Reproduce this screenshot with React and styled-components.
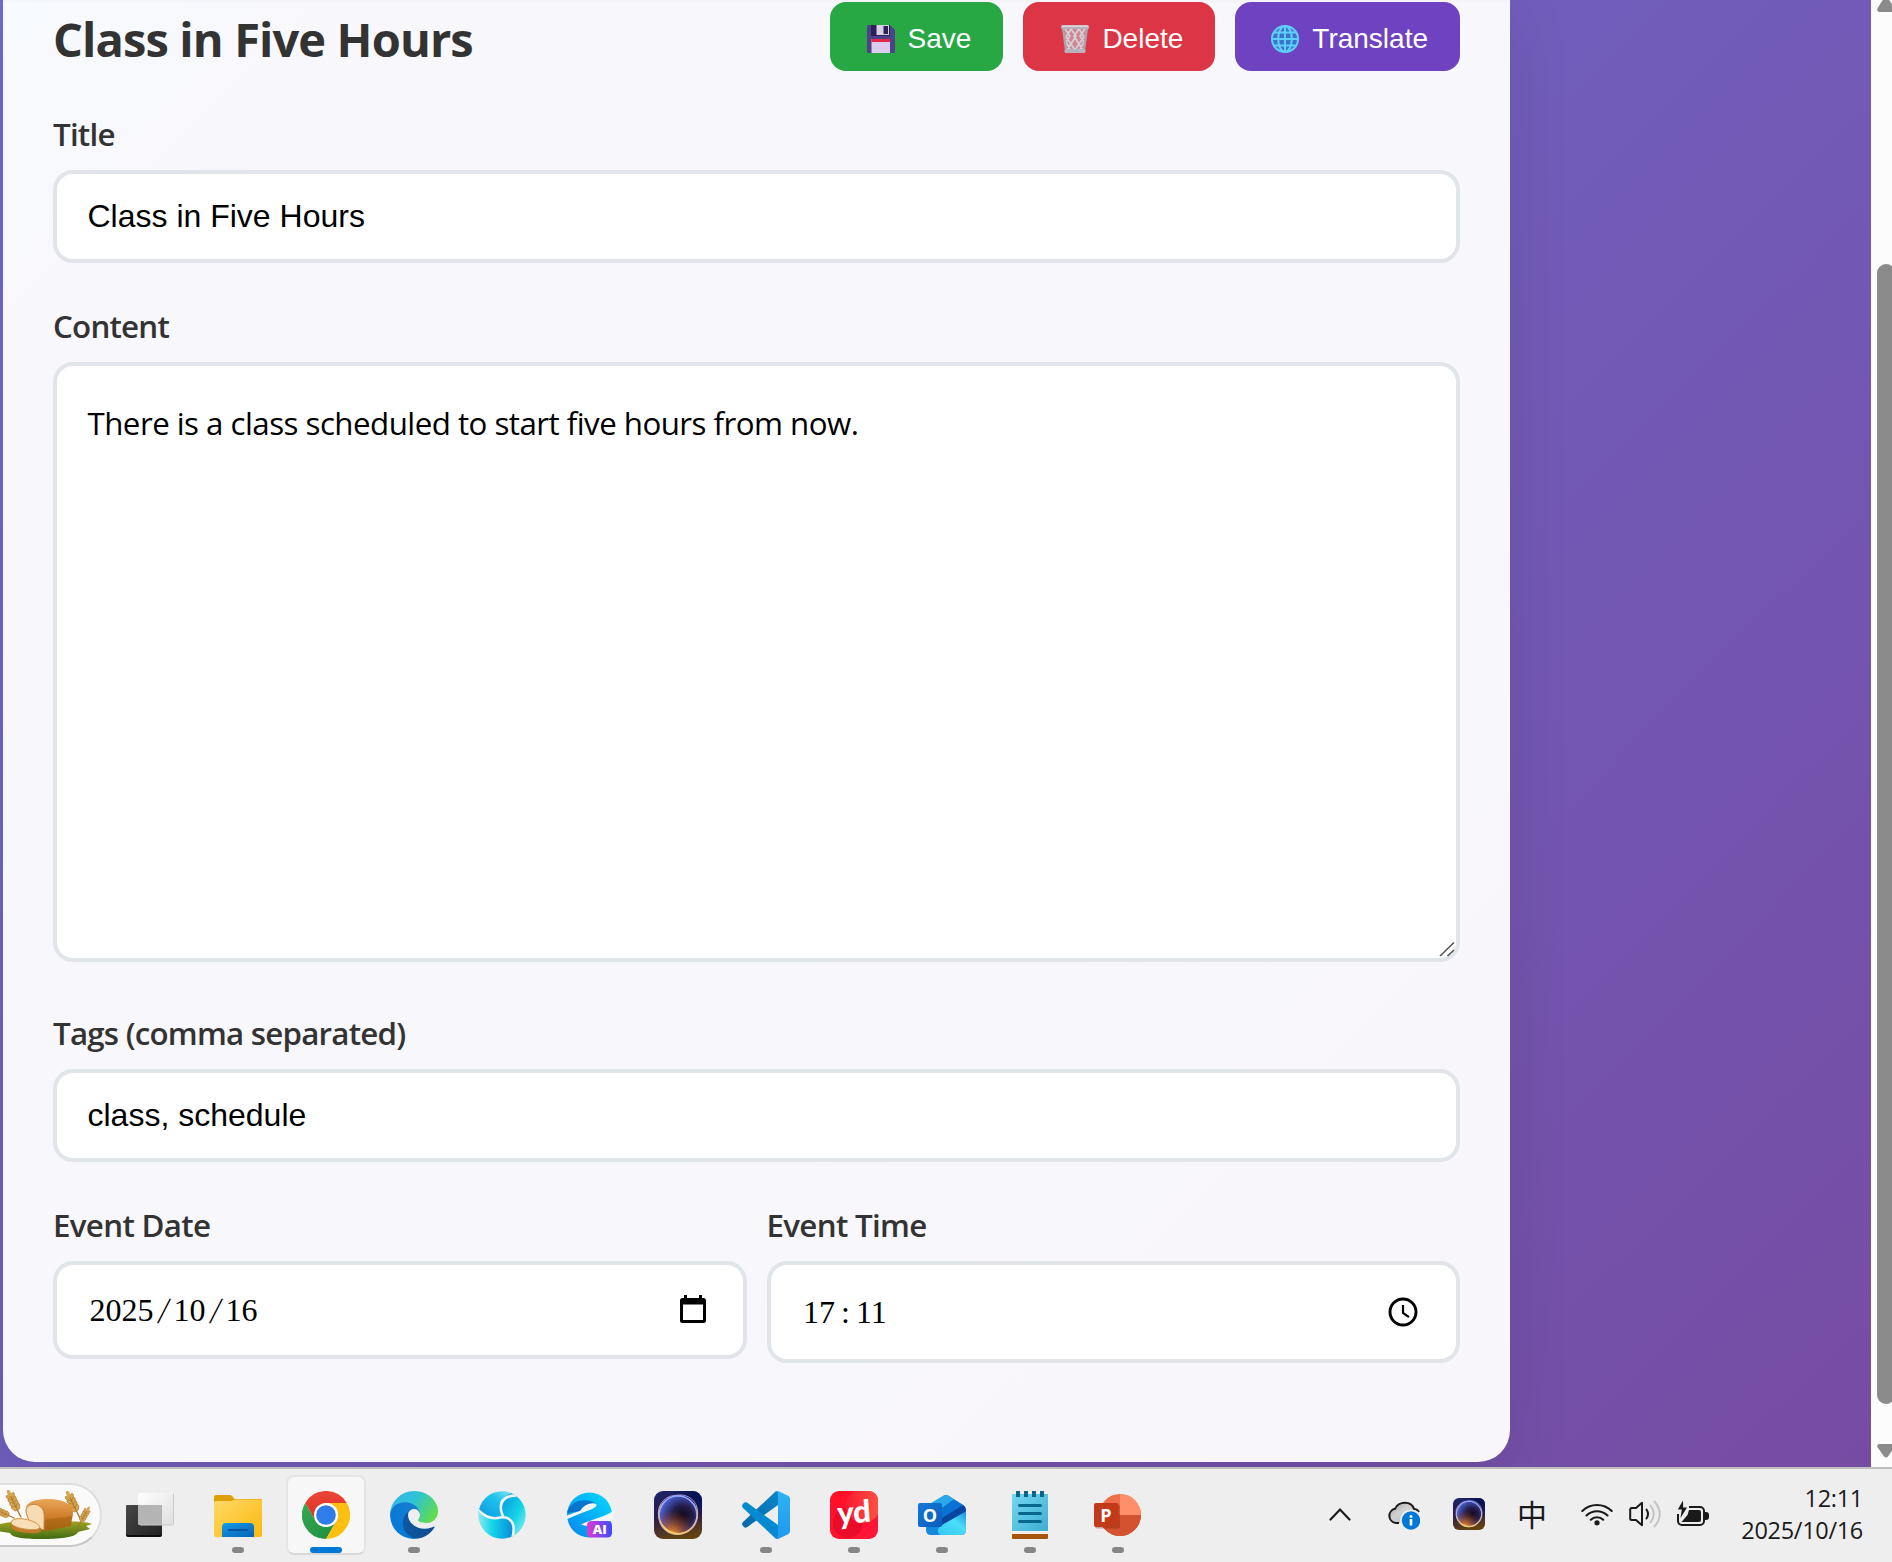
import React from "react";
import styled, { createGlobalStyle } from "styled-components";

const ui = `"Open Sans", "Noto Sans", sans-serif`;
const control = `"Liberation Sans", Arial, sans-serif`;
const picker = `"Liberation Serif", "Times New Roman", serif`;

const Global = createGlobalStyle`
  * { box-sizing: border-box; }
  body { margin: 0; overflow: hidden; }
  svg { display: block; flex: none; }
`;

const Screen = styled.div`
  width: 1892px;
  height: 1562px;
  display: flex;
  flex-direction: column;
  overflow: hidden;
  font-family: ${ui};
`;
const Viewport = styled.div`
  display: flex;
  height: 1467px;
`;
const Page = styled.main`
  flex: 1;
  padding-left: 3px;
  overflow: hidden;
  background: linear-gradient(135deg, #6c6dd1 0%, #764ca3 100%);
`;
const Panel = styled.section`
  width: 1507px;
  height: 1462px;
  padding: 2px 50px 0;
  border-radius: 0 0 32px 32px;
  background:
    linear-gradient(rgba(40, 30, 70, 0.02), rgba(40, 30, 70, 0.01)) 0 0 / 100% 3px no-repeat,
    linear-gradient(135deg, #f7fafe 0%, #f8f7fc 14%, #f8f7fc 60%, #f8f6fb 100%);
  box-shadow: 0 16px 64px rgba(0, 0, 0, 0.1);
`;
const Header = styled.header`
  display: flex;
  align-items: center;
  justify-content: space-between;
  height: 69px;
  margin-bottom: 41px;
`;
const Heading = styled.h1`
  margin: 0;
  padding-top: 5px;
  font-size: 47px;
  line-height: 64px;
  font-weight: 700;
  letter-spacing: -0.88px;
  color: #333;
`;
const Actions = styled.div`
  display: flex;
  gap: 20px;
`;
const ActionButton = styled.button`
  display: flex;
  align-items: center;
  gap: 13px;
  height: 69px;
  padding: 0 32px 0 ${(p) => p.$inset}px;
  border: 0;
  border-radius: 16px;
  background: ${(p) => p.$color};
  color: #fff;
  font: 28px ${control};
  span { padding-top: 5px; }
  svg { margin-top: 4px; }
`;
const Field = styled.div`
  flex: 1;
  margin-bottom: ${(p) => p.$gap ?? 0}px;
`;
const Label = styled.label`
  display: block;
  margin-bottom: 14px;
  font-size: 31.3px;
  line-height: 44px;
  font-weight: 600;
  letter-spacing: ${(p) => p.$tracking ?? -0.78}px;
  color: #333;
`;
const TextInput = styled.input`
  display: block;
  width: 100%;
  height: 93px;
  padding: 0 28px 0 30.5px;
  border: 4px solid #e1e5e9;
  border-radius: 20px;
  background: #fff;
  color: #000;
  font: 32px ${control};
  outline: 0;
`;
const AreaWrap = styled.div`
  position: relative;
`;
const TextArea = styled.textarea`
  display: block;
  width: 100%;
  height: 600px;
  padding: 32px 28px 28px 30.5px;
  border: 4px solid #e1e5e9;
  border-radius: 20px;
  background: #fff;
  color: #000;
  font-family: ${ui};
  font-size: 31.3px;
  line-height: 51.2px;
  letter-spacing: -0.54px;
  resize: none;
  outline: 0;
`;
const Grip = styled.svg`
  position: absolute;
  right: 5px;
  bottom: 5px;
`;
const FieldRow = styled.div`
  display: flex;
  align-items: flex-start;
  gap: 20px;
`;
const PickerBox = styled.div`
  display: flex;
  align-items: center;
  justify-content: space-between;
  height: ${(p) => p.$height}px;
  padding: 0 ${(p) => p.$right}px 0 32.5px;
  border: 4px solid #e1e5e9;
  border-radius: 20px;
  background: #fff;
  color: #000;
  font: 32px ${picker};
`;
const PickerValue = styled.div`
  display: flex;
`;
const Separator = styled.span`
  width: ${(p) => p.$width ?? 20}px;
  text-align: center;
`;
const SlashMark = styled(Separator)`
  transform: skewX(-12deg) scaleY(1.15);
`;
const Scrollbar = styled.aside`
  display: flex;
  flex-direction: column;
  width: 21px;
  padding-left: 6px;
  overflow: hidden;
  background: #fcfcfc;
`;
const Thumb = styled.div`
  width: 18px;
  height: 1140px;
  margin: 252px 0 40px;
  border-radius: 9px;
  background: #8b8b8b;
`;
const Taskbar = styled.footer`
  display: flex;
  align-items: stretch;
  height: 95px;
  border-top: 2px solid #bebebe;
  background: #eee;
`;
const SearchPill = styled.div`
  width: 102px;
  height: 64px;
  margin: 14px 4px 0 0;
  border: 2px solid #dedede;
  border-bottom-color: #c6c6c6;
  border-left: 0;
  border-radius: 0 32px 32px 0;
  background: #fafafa;
  overflow: hidden;
`;
const Apps = styled.nav`
  display: flex;
`;
const AppCell = styled.div`
  display: flex;
  flex-direction: column;
  align-items: center;
  width: 80px;
  height: 80px;
  margin: 6px 4px 0;
  padding-top: 14px;
  border: 2px solid ${(p) => (p.$active ? "#e4e4e4" : "transparent")};
  border-bottom-color: ${(p) => (p.$active ? "#d8d8d8" : "transparent")};
  border-radius: 8px;
  background: ${(p) => (p.$active ? "#f7f7f7" : "transparent")};
`;
const Indicator = styled.i`
  width: ${(p) => (p.$active ? 32 : 12)}px;
  height: 6px;
  margin-top: 8px;
  border-radius: 3px;
  background: ${(p) => (p.$active ? "#0078d7" : "#868686")};
`;
const Tray = styled.div`
  display: flex;
  align-items: center;
  margin-left: auto;
  padding-right: 29px;
  svg { margin-bottom: 3px; }
`;
const Slot = styled.div`
  display: flex;
  justify-content: center;
  width: ${(p) => p.$width}px;
`;
const Ime = styled.span`
  font: 400 30px/32px "Noto Sans CJK SC", sans-serif;
  color: #1a1a1a;
  margin-bottom: 6px;
`;
const Clock = styled.div`
  width: 151px;
  padding-bottom: 3px;
  text-align: right;
  font-size: 23.5px;
  line-height: 32px;
  letter-spacing: -0.3px;
  color: #1a1a1a;
`;

/* ---------- button emoji ---------- */
const Floppy = () => (
  <svg width="28" height="28" viewBox="0 0 28 28">
    <path d="M1.500 0H23l5 5v21.500a1.500 1.500 0 0 1-1.500 1.500h-25A1.500 1.500 0 0 1 0 26.500v-25A1.500 1.500 0 0 1 1.500 0z" fill="#4d4187" />
    <path d="M4 0h19v9.500a1.500 1.500 0 0 1-1.500 1.500h-16A1.500 1.500 0 0 1 4 9.500z" fill="#2c2154" />
    <path d="M9.500 0H22v10H9.500z" fill="#d8d0e4" />
    <path d="M16.500 1H21v8h-4.500z" fill="#2c2154" />
    <path d="M4.500 14h18.500v14H4.500z" fill="#dccbea" />
    <path d="M4.500 14h18.500v3H4.500z" fill="#e5274b" />
  </svg>
);
const Bin = () => (
  <svg width="28" height="28" viewBox="0 0 28 28">
    <path d="M2 3h24l-2.500 23h-19z" fill="#cf8791" />
    <path d="M4 4l5 7-4 6 4 7M10 4l-5 8 5 7-4 6M10 4l5 7-5 8 4 6M18 4l-5 7 5 8-4 6M18 4l5 8-5 7 4 6M24 4l-5 7 4 6-4 7" fill="none" stroke="#d6d0d9" strokeWidth="1.700" />
    <path d="M2 3l3 22M26 3l-3 22" stroke="#aaa3ae" strokeWidth="2.200" />
    <rect x="0" y="0" width="28" height="4" rx="1.500" fill="#b9b3bc" />
    <rect x="1" y=".5" width="26" height="1.500" rx=".7" fill="#dcd7df" />
    <rect x="3.500" y="24" width="21" height="4" rx="1.500" fill="#b9b3bc" />
  </svg>
);
const Globe = () => (
  <svg width="28" height="28" viewBox="0 0 28 28">
    <circle cx="14" cy="14" r="13.500" fill="#3a74cf" />
    <g fill="none" stroke="#5fd0fb" strokeWidth="2">
      <circle cx="14" cy="14" r="13" />
      <ellipse cx="14" cy="14" rx="6.800" ry="13" />
      <path d="M14 1v26M1 14h26M3 7.500h22M3 20.500h22" />
    </g>
  </svg>
);

/* ---------- picker icons ---------- */
const Calendar = () => (
  <svg width="28" height="32" viewBox="0 0 28 32">
    <path d="M5 1h3v3h12V1h3v3h1.500A2.500 2.500 0 0 1 27 6.500v20a2.500 2.500 0 0 1-2.500 2.500h-21A2.500 2.500 0 0 1 1 26.500v-20A2.500 2.500 0 0 1 3.500 4H5zM4 10.500V26h20V10.500z" fill="#000" fillRule="evenodd" />
  </svg>
);
const ClockFace = () => (
  <svg width="30" height="30" viewBox="0 0 30 30" fill="none" stroke="#000">
    <circle cx="15" cy="15" r="13" strokeWidth="2.900" />
    <path d="M15 8v8l6 4.200" strokeWidth="2.200" />
  </svg>
);

/* ---------- taskbar icons ---------- */
const Icon = ({ children, box = "0 0 48 48", size = 48 }) => (
  <svg width={size} height={size} viewBox={box}>{children}</svg>
);
const Ear = ({ at }) => (
  <g transform={at}>
    <path d="M0 16V-8" stroke="#a9762b" strokeWidth="1.300" />
    {[-7, -3, 1, 5].map((y) => (
      <g key={y} fill="#d9a650" stroke="#a97327" strokeWidth=".6">
        <ellipse cx="-2.200" cy={y} rx="1.700" ry="3.200" transform={`rotate(-28 -2.200 ${y})`} />
        <ellipse cx="2.200" cy={y} rx="1.700" ry="3.200" transform={`rotate(28 2.200 ${y})`} />
      </g>
    ))}
    <ellipse cy="-11" rx="1.800" ry="3.500" fill="#d9a650" />
  </g>
);
const Bread = () => (
  <svg width="100" height="60" viewBox="0 0 100 60">
    <defs>
      <linearGradient id="loaf" x1="0" y1="0" x2="0" y2="1">
        <stop offset="0" stopColor="#eaa75a" /><stop offset=".6" stopColor="#cc7a24" /><stop offset="1" stopColor="#9c560f" />
      </linearGradient>
      <linearGradient id="grass" x1="0" y1="0" x2="0" y2="1">
        <stop offset="0" stopColor="#a3a323" /><stop offset="1" stopColor="#416c12" />
      </linearGradient>
    </defs>
    <path d="M-4 40c10-3 24-4 46-4s44 0 50 3l-6 2 4 3-12 3c-2 6-22 7-34 7s-32 0-34-6L-4 46z" fill="url(#grass)" />
    <Ear at="translate(14 18) rotate(-26)" />
    <Ear at="translate(3 28) rotate(-66) scale(.8)" />
    <Ear at="translate(73 19) rotate(-26)" />
    <Ear at="translate(84 31) rotate(30) scale(.75)" />
    <path d="M26 23c1-7 12-9 22-9 13 0 25 4 25 14 0 5-2 7-2 13L44 46 30 40z" fill="url(#loaf)" />
    <path d="M44 35c8-1 20-3 28-4l-1 10-27 5z" fill="#a96816" opacity=".7" />
    <path d="M26 25c1-7 13-8 17 0 2 4 1 7 1 20l-15-5c0-8-3-9-3-15z" fill="#f7dcb3" stroke="#c77f31" />
    <path d="M11 38c1-5 14-5 24 0 6 3 7 7 5 9-6 3-27 0-28-4z" fill="#c37a2d" />
    <path d="M11 37c2-5 15-4 23 0 6 3 7 6 4 7-7 2-27-1-27-7z" fill="#f8dfb8" stroke="#d49043" />
  </svg>
);
const TaskView = () => (
  <Icon>
    <defs>
      <linearGradient id="tvd" x1="0" y1="0" x2="1" y2="1"><stop stopColor="#484848" /><stop offset="1" stopColor="#232323" /></linearGradient>
      <linearGradient id="tvl" x1="0" y1="0" x2="1" y2="1"><stop stopColor="#fff" /><stop offset="1" stopColor="#dedede" /></linearGradient>
    </defs>
    <rect y="14" width="36" height="32" rx="2" fill="#0c0c0c" />
    <rect y="14" width="36" height="30" rx="2" fill="url(#tvd)" />
    <rect x="12" y="2" width="36" height="32" rx="2" fill="url(#tvl)" />
    <path d="M12 14h24v20H14a2 2 0 0 1-2-2z" fill="#b4b4b4" />
    <path d="M47.500 3v29.500a1.500 1.500 0 0 1-1.500 1.500H14" fill="none" stroke="#c9c9c9" />
  </Icon>
);
const Explorer = () => (
  <Icon>
    <defs>
      <linearGradient id="fy" x1="0" y1="0" x2="1" y2="1"><stop stopColor="#ffd968" /><stop offset="1" stopColor="#fab90c" /></linearGradient>
      <linearGradient id="fb" x1="0" y1="0" x2="1" y2="1"><stop stopColor="#149ae6" /><stop offset="1" stopColor="#0764b8" /></linearGradient>
    </defs>
    <path d="M0 6a2 2 0 0 1 2-2h14c3 0 3 4 6 4h25a1 1 0 0 1 1 1v12H0z" fill="#df9f07" />
    <path d="M0 12a2 2 0 0 1 2-2h15c2 0 2-1.500 5-1.500h24a2 2 0 0 1 2 2V44a2 2 0 0 1-2 2H2a2 2 0 0 1-2-2z" fill="url(#fy)" />
    <path d="M8 46V36a4 4 0 0 1 4-4h24a4 4 0 0 1 4 4v10z" fill="url(#fb)" />
    <rect x="14" y="38" width="20" height="2" rx="1" fill="#0c519b" />
  </Icon>
);
const Chrome = () => (
  <Icon>
    <defs>
      <linearGradient id="chr" x1="0" y1="0" x2="0" y2="1"><stop stopColor="#ec4637" /><stop offset="1" stopColor="#db2f27" /></linearGradient>
      <linearGradient id="chg" x1="0" y1="0" x2="1" y2="1"><stop stopColor="#34a853" /><stop offset="1" stopColor="#1e8e3e" /></linearGradient>
    </defs>
    <path d="M24 12h20.800A24 24 0 0 0 3.200 12L13.600 30z" fill="url(#chr)" />
    <path d="M3.200 12A24 24 0 0 0 24 48L34.400 30A12 12 0 0 1 13.600 30z" fill="url(#chg)" />
    <path d="M44.800 12A24 24 0 0 1 24 48L34.400 30A12 12 0 0 0 24 12z" fill="#fdc010" />
    <circle cx="24" cy="24" r="12" fill="#fff" />
    <circle cx="24" cy="24" r="9.800" fill="#2f7cec" />
  </Icon>
);
const Edge = () => (
  <Icon box="4.400 5 256 256">
    <defs>
      <linearGradient id="e1" x1="0" x2="1"><stop stopColor="#0c59a4" /><stop offset="1" stopColor="#114a8b" /></linearGradient>
      <linearGradient id="e2" x1="1" y1="0" x2="0" y2="1"><stop stopColor="#1b7fd0" /><stop offset="1" stopColor="#0078d9" /></linearGradient>
      <linearGradient id="e3" x1="0" y1=".2" x2="1" y2=".6"><stop stopColor="#35b6f3" /><stop offset=".5" stopColor="#2fc4d0" /><stop offset="1" stopColor="#62dc4b" /></linearGradient>
    </defs>
    <path d="M235.680 195.460a93.730 93.730 0 0 1-10.540 4.710 101.870 101.870 0 0 1-35.900 6.460c-47.320 0-88.540-32.550-88.540-74.320A31.480 31.480 0 0 1 117.130 105c-42.800 1.800-53.800 46.400-53.800 72.530 0 73.880 68.090 81.370 82.760 81.370 7.910 0 19.840-2.300 27-4.560l1.310-.44a128.340 128.340 0 0 0 66.600-52.800 4 4 0 0 0-5.320-5.640z" fill="url(#e1)" />
    <path d="M110.340 246.340A79.200 79.200 0 0 1 87.600 225a80.720 80.720 0 0 1 29.530-120c3.120-1.470 8.450-4.130 15.540-4a32.350 32.350 0 0 1 25.690 13 31.880 31.880 0 0 1 6.360 18.660c0-.21 24.460-79.600-80-79.600-43.900 0-80 41.660-80 78.210a130.150 130.150 0 0 0 12.110 56 128 128 0 0 0 156.380 67.110 75.550 75.550 0 0 1-62.780-8z" fill="url(#e2)" />
    <path d="M156.940 153.780c-.81 1.050-3.300 2.500-3.300 5.660 0 2.610 1.700 5.120 4.720 7.230 14.380 10 41.490 8.680 41.560 8.680a59.560 59.560 0 0 0 30.270-8.350A61.380 61.380 0 0 0 260.410 114c.26-22.410-8-37.310-11.340-43.910C227.860 28.760 182.350 5 132.400 5a128 128 0 0 0-128 126.200c.48-36.540 36.800-66.050 80-66.050 3.500 0 23.460.34 42 10.070 16.340 8.580 24.900 18.940 30.850 29.210 6.180 10.670 7.280 24.150 7.280 29.520s-2.740 13.330-7.590 19.830z" fill="url(#e3)" />
  </Icon>
);
const Swirl = () => (
  <Icon>
    <defs>
      <linearGradient id="s1" x1="0" y1="1" x2="1" y2="0"><stop stopColor="#0a92de" /><stop offset=".6" stopColor="#1fc3ec" /><stop offset="1" stopColor="#a5ecf5" /></linearGradient>
      <linearGradient id="s2" x1="0" y1="0" x2="1" y2="1"><stop stopColor="#098fdc" /><stop offset=".55" stopColor="#13d4e6" /><stop offset="1" stopColor="#c5f3f6" /></linearGradient>
      <linearGradient id="s3" x1="0" y1="0" x2="1" y2="0"><stop stopColor="#9ceff3" /><stop offset=".45" stopColor="#10d2e8" /><stop offset="1" stopColor="#0c86d8" /></linearGradient>
      <clipPath id="sc"><circle cx="24" cy="24" r="23.700" /></clipPath>
    </defs>
    <g clipPath="url(#sc)">
      <path d="M-2 20V0h44C28 3 21 8 22 15c1 5 3 7 3 11-8 6-17 1-27-6z" fill="url(#s1)" />
      <path d="M40 0h10v48H34c3-8 2-14-3-18-3-2-6-2-6-4 0-4-4-6-2-13 2-8 9-11 17-13z" fill="url(#s2)" />
      <path d="M-2 20c10 8 17 9 27 6 10 3 13 12 10 22H-2z" fill="url(#s3)" />
      <g fill="none" stroke="#f0f3f4" strokeWidth="2.600">
        <path d="M25.500 26.500c-1-4-3.500-6-2.500-12C24.500 8 30 4.500 38 4.500" />
        <path d="M0 19c8 8 15 9.500 22 7.500 8-1.500 12.500 3 13.500 9 .5 5 0 8-1.500 13" />
      </g>
    </g>
  </Icon>
);
const BrowserAI = () => (
  <Icon>
    <defs>
      <linearGradient id="b1" x1="1" y1="0" x2="0" y2="1"><stop stopColor="#05dcff" /><stop offset="1" stopColor="#0583ea" /></linearGradient>
      <linearGradient id="b2" x1="0" x2="1"><stop stopColor="#e23ad0" /><stop offset="1" stopColor="#3a4bfa" /></linearGradient>
    </defs>
    <circle cx="23.500" cy="24" r="22.500" fill="url(#b1)" />
    <path d="M1 22c3-13 20-16 29-9-9-1-12 3-15 7z" fill="#0867c4" opacity=".8" />
    <path d="M0 25C8 21.500 12 21 14.500 19.500 17 14 26 10.500 30 13c3 3-6 6-13 8.500C11 24 6 26 0 28.500z" fill="#f1f5f7" />
    <path d="M48 19C40 26 26 28 15 33.500c4 2 9 1 15 .5l18-5z" fill="#f1f5f7" />
    <rect x="21" y="30" width="25" height="16.500" rx="4.500" fill="url(#b2)" />
    <text x="33.800" y="43" textAnchor="middle" fill="#fff" fontFamily="Open Sans, sans-serif" fontSize="13" fontWeight="800">AI</text>
  </Icon>
);
const Aura = ({ size = 48 }) => (
  <Icon size={size}>
    <defs>
      <linearGradient id="a1" x1=".3" y1="0" x2=".5" y2="1"><stop stopColor="#1d2463" /><stop offset=".45" stopColor="#291b4d" /><stop offset="1" stopColor="#634211" /></linearGradient>
      <radialGradient id="a2" cx=".62" cy=".52" r=".6"><stop stopColor="#0c0919" /><stop offset=".45" stopColor="#241d4a" /><stop offset="1" stopColor="#4b64d8" /></radialGradient>
      <radialGradient id="a3" cx=".35" cy="1" r=".65"><stop stopColor="#f58a1c" /><stop offset="1" stopColor="#8b2e18" stopOpacity="0" /></radialGradient>
      <linearGradient id="a4" x1=".6" y1="0" x2=".4" y2="1"><stop stopColor="#8fa4ff" /><stop offset=".55" stopColor="#c3a6dd" /><stop offset="1" stopColor="#ffd35a" /></linearGradient>
      <radialGradient id="a5" cx="1" cy="0" r=".7"><stop stopColor="#001052" /><stop offset="1" stopColor="#001052" stopOpacity="0" /></radialGradient>
    </defs>
    <rect width="48" height="48" rx="9" fill="url(#a1)" />
    <rect width="48" height="48" rx="9" fill="url(#a5)" />
    <circle cx="24" cy="24" r="19" fill="url(#a2)" />
    <circle cx="24" cy="24" r="19" fill="url(#a3)" />
    <g fill="none" stroke="url(#a4)">
      <circle cx="24" cy="24" r="19" strokeWidth="1.600" />
      <ellipse cx="23.500" cy="23.500" rx="20" ry="18.500" strokeWidth=".8" transform="rotate(35 24 24)" />
      <ellipse cx="24.500" cy="24" rx="20.500" ry="18.500" strokeWidth=".8" transform="rotate(-50 24 24)" />
    </g>
  </Icon>
);
const Code = () => (
  <Icon>
    <defs>
      <linearGradient id="c1" x1="1" y1="0" x2="0" y2="1"><stop stopColor="#0a86c8" /><stop offset="1" stopColor="#0567a8" /></linearGradient>
      <linearGradient id="c2" x1="0" y1="0" x2="0" y2="1"><stop stopColor="#2cb4f5" /><stop offset="1" stopColor="#1f98ef" /></linearGradient>
    </defs>
    <path d="M1 31L33 1q1.500-1.200 3-1v14L5 36.200q-1.500 1-3-.2L.6 34.500Q-.6 32.500 1 31z" fill="url(#c1)" />
    <path d="M1 17L33 47q1.500 1.200 3 1V34L5 11.600q-1.500-1-3 .2L.6 13.500Q-.6 15.500 1 17z" fill="#058ad2" />
    <path d="M36 0l10.500 5q1.500 1 1.500 3v32q0 2-1.500 3L36 48q-1.500 0-3-1 3 1 3-2V3q0-3-3-2 1.500-1.200 3-1z" fill="url(#c2)" />
  </Icon>
);
const Youdao = () => (
  <Icon>
    <defs>
      <linearGradient id="y1" x1="0" y1="0" x2="1" y2="1"><stop stopColor="#ff0f26" /><stop offset="1" stopColor="#ff1739" /></linearGradient>
      <linearGradient id="y2" x1="0" y1="0" x2="1" y2="0"><stop stopColor="#fa1a32" /><stop offset="1" stopColor="#ff5442" /></linearGradient>
      <clipPath id="yc"><rect width="48" height="48" rx="9" /></clipPath>
    </defs>
    <g clipPath="url(#yc)">
      <rect width="48" height="48" fill="url(#y1)" />
      <circle cx="18" cy="32" r="15" fill="#d80822" opacity=".55" />
      <circle cx="33" cy="15" r="17" fill="url(#y2)" />
    </g>
    <text x="24" y="32" textAnchor="middle" fill="#fff" fontFamily="Lato, sans-serif" fontSize="31" fontWeight="900" letterSpacing="-.3" transform="rotate(-4 24 24)">yd</text>
  </Icon>
);
const Outlook = () => (
  <Icon>
    <defs>
      <linearGradient id="o1" x1="0" y1="0" x2="1" y2="1"><stop stopColor="#1578d8" /><stop offset="1" stopColor="#0b5cbb" /></linearGradient>
      <linearGradient id="o2" x1="0" y1="1" x2="1" y2="0"><stop stopColor="#35c8ee" /><stop offset=".6" stopColor="#4bdcf8" /><stop offset="1" stopColor="#1a8be0" /></linearGradient>
    </defs>
    <path d="M8 18q0-3 3-4.500L25 5q3-2 6 0l14 9q3 2 3 5v20q0 5-5 5H13q-5 0-5-5z" fill="#1489dd" />
    <path d="M8 18q0-3 3-4.500L25 5q3-2 6 0l5 3.500L10 27z" fill="#29a8ea" />
    <path d="M36 8.500l9 5.500q3 2 3 5L25 32H14V24z" fill="#0a72d2" />
    <path d="M45 14q3 2 3 5 0 2-3 4L26 35h-8v-4z" fill="#08469f" />
    <path d="M48 20v19q0 5-5 5H24q-4 0-4-4t4-6l21-12q3-1 3-2z" fill="url(#o2)" />
    <rect y="12" width="24" height="24" rx="2" fill="url(#o1)" />
    <text x="12" y="30.500" textAnchor="middle" fill="#fff" fontFamily="Open Sans, sans-serif" fontSize="18" fontWeight="700">O</text>
  </Icon>
);
const Notepad = () => (
  <Icon>
    <defs>
      <linearGradient id="n1" x1="0" y1="0" x2="1" y2="1"><stop stopColor="#73d8ef" /><stop offset="1" stopColor="#3eadd3" /></linearGradient>
    </defs>
    <rect x="6" y="40" width="36" height="8" rx="1" fill="#a8540d" />
    <path d="M6 39h36v4H6z" fill="#f4efea" />
    <path d="M6 3h36v37H6z" fill="url(#n1)" />
    <path d="M12 0v6M20 0v6M28 0v6M36 0v6" stroke="#0a6588" strokeWidth="4" />
    <path d="M13.500 14.500h21M13.500 22.500h21M13.500 30.500h21" stroke="#07678d" strokeWidth="3" strokeLinecap="round" />
  </Icon>
);
const PowerPoint = () => (
  <Icon>
    <circle cx="26" cy="24" r="21" fill="#ee6d4b" />
    <path d="M26 3a21 21 0 0 1 21 21H26z" fill="#ff8f6b" />
    <path d="M5 24h42a21 21 0 0 1-42 0z" fill="#d35230" />
    <rect x="1" y="13.500" width="25" height="24" rx="2" fill="#7b1f0a" opacity=".35" />
    <rect y="12" width="24.500" height="24" rx="2" fill="#c13b1b" />
    <text x="12" y="30.500" textAnchor="middle" fill="#fff" fontFamily="Open Sans, sans-serif" fontSize="18" fontWeight="700">P</text>
  </Icon>
);

const apps = [
  { name: "task-view", Art: TaskView },
  { name: "explorer", Art: Explorer, running: true },
  { name: "chrome", Art: Chrome, running: true, active: true },
  { name: "edge", Art: Edge, running: true },
  { name: "swirl", Art: Swirl },
  { name: "browser-ai", Art: BrowserAI },
  { name: "aura", Art: Aura },
  { name: "code", Art: Code, running: true },
  { name: "youdao", Art: Youdao, running: true },
  { name: "outlook", Art: Outlook, running: true },
  { name: "notepad", Art: Notepad, running: true },
  { name: "powerpoint", Art: PowerPoint, running: true },
];

/* ---------- tray icons ---------- */
const Chevron = () => (
  <svg width="22" height="14" viewBox="0 0 22 14" fill="none" stroke="#1a1a1a" strokeWidth="2.200" strokeLinecap="round">
    <path d="M1.500 12.500L11 2.500l9.500 10" />
  </svg>
);
const Cloud = () => (
  <svg width="32" height="32" viewBox="0 0 32 32">
    <defs><linearGradient id="cl" x1="0" y1="0" x2="1" y2="1"><stop stopColor="#9a9a9a" /><stop offset=".4" stopColor="#d0d0d0" /><stop offset="1" stopColor="#bbb" /></linearGradient></defs>
    <path d="M14 25H8A7 7 0 0 1 7 11c2-4 6-6 10-6 5 0 8 3 9 6 3 0 5 2 5 4v10z" fill="url(#cl)" />
    <path d="M11 25H8A7.200 7.200 0 0 1 7 10.800C9 6.500 13 4.800 17 4.800c5 0 8 3 9 6.200 2 0 4 1.500 5 3" fill="none" stroke="#1a1a1a" strokeWidth="2" />
    <circle cx="23" cy="22.500" r="11" fill="#eee" />
    <circle cx="23" cy="22.500" r="9.200" fill="#0078d7" />
    <path d="M23 21v6.500M23 17.200v2.500" stroke="#fff" strokeWidth="2.600" />
  </svg>
);
const Wifi = () => (
  <svg width="32" height="24" viewBox="0 0 32 24" fill="none" stroke="#1a1a1a" strokeWidth="2.100" strokeLinecap="round">
    <path d="M1.300 9a21 21 0 0 1 29.400 0M5.500 13.500a15 15 0 0 1 21 0M9.800 17.700a9 9 0 0 1 12.400 0" />
    <circle cx="16" cy="20.800" r="2.600" fill="#1a1a1a" stroke="none" />
  </svg>
);
const Speaker = () => (
  <svg width="32" height="28" viewBox="0 0 32 28" fill="none" strokeWidth="2" strokeLinecap="round" strokeLinejoin="round">
    <path d="M1.200 9.500q0-1.500 1.500-1.500H7l6-5.200v22.500L7 20H2.700q-1.500 0-1.500-1.500z" stroke="#1a1a1a" />
    <path d="M17.500 9.500q3 4.500 0 9" stroke="#1a1a1a" />
    <path d="M21.500 5.500q6.500 8.500 0 17M25.500 1.500q10.500 12.500 0 25" stroke="#c4c4c4" />
  </svg>
);
const Battery = () => (
  <svg width="33" height="28" viewBox="0 0 33 28">
    <path d="M12 7h11a4 4 0 0 1 4 4v10a4 4 0 0 1-4 4H5a4 4 0 0 1-4-4v-7" fill="none" stroke="#1a1a1a" strokeWidth="2" />
    <path d="M28 12h1a3 3 0 0 1 3 3v2a3 3 0 0 1-3 3h-1z" fill="#1a1a1a" />
    <path d="M12 10h10a2 2 0 0 1 2 2v8a2 2 0 0 1-2 2H4.500l6-7z" fill="#1a1a1a" />
    <path d="M6 .5L.8 9.500h4L3.500 18 10 7.500H6.200z" fill="#1a1a1a" />
  </svg>
);
const Arrow = ({ down }) => (
  <svg width="18" height={down ? 14 : 12} viewBox={down ? "0 0 18 14" : "0 0 18 12"}>
    <path d={down ? "M2 0h14q3 1 1 4l-6 8.500q-2 2-4 0L1 4Q-1 1 2 0z" : "M1 7.500L7-2h4l6 9.500q2 3.500-1 4.500H2q-3-1-1-4.500z"} fill="#8b8b8b" />
  </svg>
);

export default function App() {
  return (
    <Screen>
      <Global />
      <Viewport>
        <Page>
          <Panel>
            <Header>
              <Heading>Class in Five Hours</Heading>
              <Actions>
                <ActionButton $color="#28a745" $inset={37}><Floppy /><span>Save</span></ActionButton>
                <ActionButton $color="#dc3545" $inset={38}><Bin /><span>Delete</span></ActionButton>
                <ActionButton $color="#6f42c1" $inset={36}><Globe /><span>Translate</span></ActionButton>
              </Actions>
            </Header>
            <Field $gap={41}>
              <Label>Title</Label>
              <TextInput defaultValue="Class in Five Hours" />
            </Field>
            <Field $gap={49}>
              <Label>Content</Label>
              <AreaWrap>
                <TextArea spellCheck={false} defaultValue="There is a class scheduled to start five hours from now." />
                <Grip width="16" height="16" viewBox="0 0 16 16" stroke="#555" strokeWidth="1.600">
                  <path d="M1 15L15 1.500M8.500 15l6.500-6" />
                </Grip>
              </AreaWrap>
            </Field>
            <Field $gap={41}>
              <Label>Tags (comma separated)</Label>
              <TextInput defaultValue="class, schedule" />
            </Field>
            <FieldRow>
              <Field>
                <Label $tracking={-0.68}>Event Date</Label>
                <PickerBox $height={98} $right={36}>
                  <PickerValue>
                    2025<SlashMark>/</SlashMark>10<SlashMark>/</SlashMark>16
                  </PickerValue>
                  <Calendar />
                </PickerBox>
              </Field>
              <Field>
                <Label $tracking={-0.68}>Event Time</Label>
                <PickerBox $height={102} $right={38}>
                  <PickerValue>17<Separator $width={21}>:</Separator>11</PickerValue>
                  <ClockFace />
                </PickerBox>
              </Field>
            </FieldRow>
          </Panel>
        </Page>
        <Scrollbar>
          <Arrow />
          <Thumb />
          <Arrow down />
        </Scrollbar>
      </Viewport>
      <Taskbar>
        <SearchPill><Bread /></SearchPill>
        <Apps>
          {apps.map(({ name, Art, running, active }) => (
            <AppCell key={name} $active={active}>
              <Art />
              {running && <Indicator $active={active} />}
            </AppCell>
          ))}
        </Apps>
        <Tray>
          <Slot $width={32}><Chevron /></Slot>
          <Slot $width={96}><Cloud /></Slot>
          <Slot $width={34}><Aura size={32} /></Slot>
          <Slot $width={92}><Ime>中</Ime></Slot>
          <Slot $width={38}><Wifi /></Slot>
          <Slot $width={58}><Speaker /></Slot>
          <Slot $width={38}><Battery /></Slot>
          <Clock>12:11<br />2025/10/16</Clock>
        </Tray>
      </Taskbar>
    </Screen>
  );
}
